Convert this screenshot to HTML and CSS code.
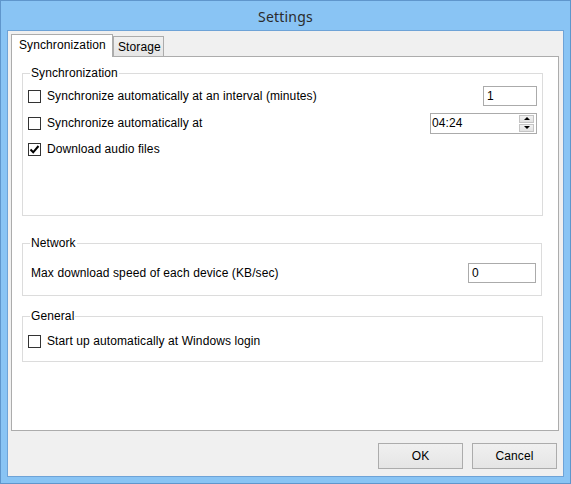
FILE: index.html
```html
<!DOCTYPE html>
<html>
<head>
<meta charset="utf-8">
<title>Settings</title>
<link rel="stylesheet" href="styles.css">
</head>
<body>
<div class="window">
  <div class="titlebar">Settings</div>
  <div class="client">
    <div class="tabs">
      <div class="tab active">Synchronization</div>
      <div class="tab">Storage</div>
    </div>
    <div class="panel">
      <fieldset class="group group-sync">
        <legend>Synchronization</legend>
        <div class="group-body">
          <div class="row">
            <div class="check"><span class="box"></span><span>Synchronize automatically at an interval (minutes)</span></div>
            <div class="input input-interval">1</div>
          </div>
          <div class="row row-2">
            <div class="check"><span class="box"></span><span>Synchronize automatically at</span></div>
            <div class="input input-time">
              <span>04:24</span>
              <span class="spin">
                <span class="spin-btn"><span class="arrow-up"></span></span>
                <span class="spin-btn"><span class="arrow-down"></span></span>
              </span>
            </div>
          </div>
          <div class="row row-3">
            <div class="check"><span class="box checked"><svg width="11" height="11" viewBox="0 0 11 11"><path d="M1.5 5.5 L4.2 8.3 L9.5 2" fill="none" stroke="#000" stroke-width="2"/></svg></span><span>Download audio files</span></div>
          </div>
        </div>
      </fieldset>
      <fieldset class="group group-net">
        <legend>Network</legend>
        <div class="row">
          <div class="label">Max download speed of each device (KB/sec)</div>
          <div class="input input-speed">0</div>
        </div>
      </fieldset>
      <fieldset class="group group-gen">
        <legend>General</legend>
        <div class="row">
          <div class="check"><span class="box"></span><span>Start up automatically at Windows login</span></div>
        </div>
      </fieldset>
    </div>
    <div class="buttons">
      <div class="btn">OK</div>
      <div class="btn">Cancel</div>
    </div>
  </div>
</div>
</body>
</html>
```
FILE: styles.css
```css
html, body {
  margin: 0;
  padding: 0;
}
body {
  width: 571px;
  height: 484px;
  overflow: hidden;
  font-family: "Liberation Sans", Arial, sans-serif;
  font-size: 12px;
  letter-spacing: 0.1px;
  color: #000;
}
.window {
  box-sizing: border-box;
  width: 571px;
  height: 484px;
  border: 1px solid #5f96cc;
  background: #89c4f4;
  padding: 0 6px 6px 6px;
  display: flex;
  flex-direction: column;
}
.titlebar {
  height: 29px;
  line-height: 31px;
  text-align: center;
  font-family: "Noto Sans", "Open Sans", sans-serif;
  font-size: 14px;
  letter-spacing: 0.2px;
  color: #2b2b2b;
}
.client {
  flex: 1;
  border: 1px solid #6ea3d7;
  background: #f0f0f0;
  display: flex;
  flex-direction: column;
}
.tabs {
  display: flex;
  align-items: flex-end;
  padding: 3px 0 0 3px;
  margin-bottom: -1px;
}
.tab {
  box-sizing: border-box;
  border: 1px solid #acacac;
  border-bottom: none;
  background: linear-gradient(#f0f0f0, #e5e5e5);
  height: 21px;
  line-height: 20px;
  padding-left: 4px;
  width: 51px;
}
.tab.active {
  position: relative;
  z-index: 1;
  background: #fff;
  height: 23px;
  line-height: 20px;
  width: 102px;
  padding-left: 7px;
}
.panel {
  box-sizing: border-box;
  height: 375px;
  margin: 0 4px 0 3px;
  border: 1px solid #acacac;
  background: #fff;
  padding-top: 9px;
}
.group {
  margin: 0 15px 0 10px;
  padding: 0 5px;
  border: 1px solid #dcdcdc;
  min-width: 0;
}
.group legend {
  padding: 0 1px;
  margin-left: 2px;
  line-height: 14px;
  font-size: 12px;
}
.group-sync {
  padding-top: 6px;
  padding-bottom: 0;
}
.group-body {
  height: 129px;
}
.group-net {
  margin-top: 20px;
  margin-right: 16px;
  padding-top: 13px;
  padding-bottom: 12px;
}
.group-gen {
  margin-top: 13px;
  padding-top: 8px;
  padding-bottom: 10px;
}
.row {
  display: flex;
  align-items: center;
  justify-content: space-between;
  height: 20px;
}
.row-2 {
  margin-top: 7px;
}
.row-3 {
  margin-top: 6px;
}
.check {
  display: flex;
  align-items: center;
  gap: 6px;
}
.box {
  box-sizing: border-box;
  width: 13px;
  height: 13px;
  border: 1px solid #333;
  background: #fff;
  display: flex;
  align-items: center;
  justify-content: center;
}
.box svg {
  display: block;
}
.label {
  padding-left: 3px;
}
.input {
  box-sizing: border-box;
  height: 20px;
  border: 1px solid #ababab;
  background: #fff;
  line-height: 18px;
  padding-left: 3px;
}
.input-interval {
  width: 54px;
}
.input-speed {
  width: 68px;
}
.input-time {
  width: 107px;
  height: 21px;
  padding: 0 2px 0 1px;
  display: flex;
  align-items: center;
  justify-content: space-between;
}
.spin {
  display: flex;
  flex-direction: column;
  gap: 1px;
}
.spin-btn {
  box-sizing: border-box;
  width: 15px;
  height: 8px;
  border: 1px solid #c4c4c4;
  background: linear-gradient(#f2f2f2, #e2e2e2);
  display: flex;
  align-items: center;
  justify-content: center;
}
.arrow-up {
  width: 0;
  height: 0;
  border-left: 3px solid transparent;
  border-right: 3px solid transparent;
  border-bottom: 3px solid #000;
}
.arrow-down {
  width: 0;
  height: 0;
  border-left: 3px solid transparent;
  border-right: 3px solid transparent;
  border-top: 3px solid #000;
}
.buttons {
  display: flex;
  justify-content: flex-end;
  gap: 9px;
  margin-top: 12px;
  padding-right: 6px;
}
.btn {
  box-sizing: border-box;
  width: 85px;
  height: 26px;
  border: 1px solid #acacac;
  background: linear-gradient(#f0f0f0, #e5e5e5);
  text-align: center;
  line-height: 24px;
}
```
